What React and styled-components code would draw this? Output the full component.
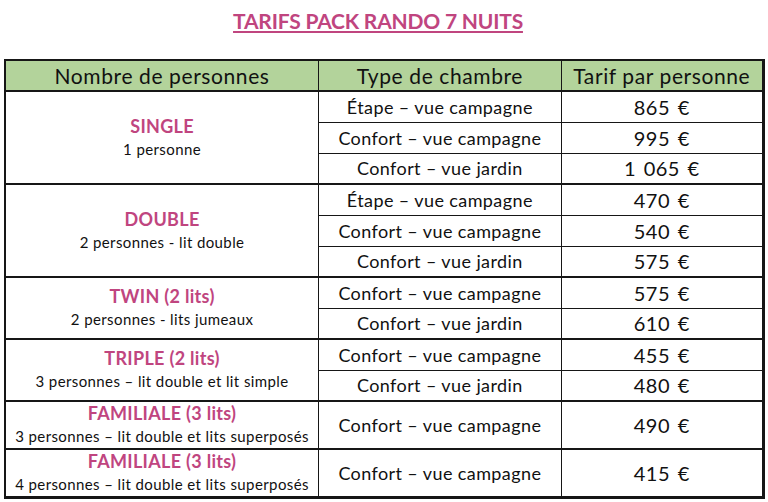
import React from "react";
import styled, { createGlobalStyle } from "styled-components";

const GlobalStyle = createGlobalStyle`
  html, body {
    margin: 0;
    padding: 0;
    background: #ffffff;
  }
  body {
    font-family: Lato, "Liberation Sans", sans-serif;
    color: #111;
  }
`;

const groups = [
  {
    name: "SINGLE",
    desc: "1 personne",
    rows: [
      ["Étape – vue campagne", "865 €"],
      ["Confort – vue campagne", "995 €"],
      ["Confort – vue jardin", "1 065 €"],
    ],
  },
  {
    name: "DOUBLE",
    desc: "2 personnes - lit double",
    rows: [
      ["Étape – vue campagne", "470 €"],
      ["Confort – vue campagne", "540 €"],
      ["Confort – vue jardin", "575 €"],
    ],
  },
  {
    name: "TWIN (2 lits)",
    desc: "2 personnes - lits jumeaux",
    rows: [
      ["Confort – vue campagne", "575 €"],
      ["Confort – vue jardin", "610 €"],
    ],
  },
  {
    name: "TRIPLE (2 lits)",
    desc: "3 personnes – lit double et lit simple",
    rows: [
      ["Confort – vue campagne", "455 €"],
      ["Confort – vue jardin", "480 €"],
    ],
  },
  {
    name: "FAMILIALE (3 lits)",
    desc: "3 personnes – lit double et lits superposés",
    tall: true,
    rows: [["Confort – vue campagne", "490 €"]],
  },
  {
    name: "FAMILIALE (3 lits)",
    desc: "4 personnes – lit double et lits superposés",
    tall: true,
    rows: [["Confort – vue campagne", "415 €"]],
  },
];

const Page = styled.div`
  width: 768px;
  height: 502px;
  padding: 8px 0 0 4px;
  box-sizing: border-box;
`;

const Title = styled.h1`
  margin: 0 0 0 -4px;
  width: 756px;
  height: 51px;
  text-align: center;
  font-size: 21px;
  font-weight: 700;
  color: #c0457f;
  text-decoration: underline;
  text-decoration-thickness: 2px;
  text-underline-offset: 2px;
  letter-spacing: -0.2px;
`;

const Table = styled.table`
  width: 761px;
  border-collapse: collapse;
  table-layout: fixed;
  border: 2px solid #161616;
  border-right-width: 3px;
  border-bottom-width: 3px;
`;

const HeadCell = styled.th`
  background: #b3d39b;
  height: 29px;
  padding: 0;
  font-size: 21px;
  font-weight: 400;
  text-align: center;
  border: 1px solid #161616;
  border-bottom-width: 2px;
  letter-spacing: 0.6px;
`;

const Row = styled.tr`
  height: ${(p) => (p.$tall ? "47px" : "31px")};
  border-top: ${(p) => (p.$first ? "2px" : "1px")} solid #161616;
`;

const GroupCell = styled.td`
  padding: 0;
  text-align: center;
  vertical-align: middle;
  border-right: 1.5px solid #161616;
  line-height: 23px;
`;

const GroupName = styled.div`
  color: #c0457f;
  font-weight: 700;
  font-size: 18px;
  letter-spacing: 0.3px;
`;

const GroupDesc = styled.div`
  font-size: 15px;
  letter-spacing: 0.4px;
`;

const RoomCell = styled.td`
  padding: 0;
  text-align: center;
  font-size: 18px;
  border-right: 1.5px solid #161616;
  letter-spacing: 0.4px;
`;

const PriceCell = styled.td`
  padding: 0;
  text-align: center;
  font-size: 20px;
  letter-spacing: 0.5px;
  word-spacing: 2px;
`;

export default function App() {
  return (
    <Page>
      <GlobalStyle />
      <Title>TARIFS PACK RANDO 7 NUITS</Title>
      <Table>
        <colgroup>
          <col style={{ width: 313 }} />
          <col style={{ width: 242 }} />
          <col style={{ width: 202 }} />
        </colgroup>
        <thead>
          <tr>
            <HeadCell>Nombre de personnes</HeadCell>
            <HeadCell>Type de chambre</HeadCell>
            <HeadCell>Tarif par personne</HeadCell>
          </tr>
        </thead>
        <tbody>
          {groups.map((g, gi) =>
            g.rows.map((r, ri) => (
              <Row key={gi + "-" + ri} $first={ri === 0} $tall={g.tall}>
                {ri === 0 && (
                  <GroupCell rowSpan={g.rows.length}>
                    <GroupName>{g.name}</GroupName>
                    <GroupDesc>{g.desc}</GroupDesc>
                  </GroupCell>
                )}
                <RoomCell>{r[0]}</RoomCell>
                <PriceCell>{r[1]}</PriceCell>
              </Row>
            ))
          )}
        </tbody>
      </Table>
    </Page>
  );
}
